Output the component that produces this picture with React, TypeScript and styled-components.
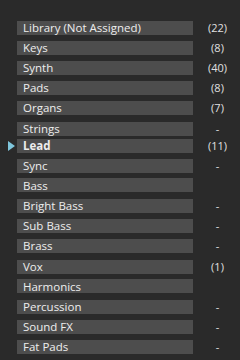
import React from "react";
import styled, { createGlobalStyle } from "styled-components";

const Global = createGlobalStyle`
  html, body { margin: 0; padding: 0; background: #2a2a2a; }
  body { width: 240px; height: 360px; overflow: hidden; }
`;

const List = styled.div`
  display: flex;
  flex-direction: column;
  gap: 6px;
  padding: 20px 0 0 0;
  width: 240px;
  height: 360px;
  box-sizing: border-box;
  background: #2a2a2a;
  font-family: "Open Sans", "DejaVu Sans", sans-serif;
`;

const Row = styled.div<{ $nudge?: number }>`
  display: grid;
  grid-template-columns: 17px 176px 1fr;
  align-items: center;
  height: 14px;
  margin-top: ${(p) => p.$nudge ?? 0}px;
`;

const Marker = styled.div`
  display: flex;
  justify-content: flex-end;
  padding-right: 2px;
`;

const Bar = styled.div<{ $bold?: boolean }>`
  display: flex;
  align-items: center;
  height: 14px;
  background: #4d4d4d;
  color: #ededed;
  font-size: 11.5px;
  font-weight: ${(p) => (p.$bold ? 700 : 400)};
  padding-left: 6px;
  white-space: nowrap;
`;

const Count = styled.div`
  color: #e0e0e0;
  font-size: 11px;
  text-align: center;
  margin-left: 2px;
`;

type Item = { name: string; count: string; nudge?: number; active?: boolean };

const items: Item[] = [
  { name: "Library (Not Assigned)", count: "(22)" },
  { name: "Keys", count: "(8)" },
  { name: "Synth", count: "(40)" },
  { name: "Pads", count: "(8)" },
  { name: "Organs", count: "(7)" },
  { name: "Strings", count: "-", nudge: 1 },
  { name: "Lead", count: "(11)", nudge: -3, active: true },
  { name: "Sync", count: "-" },
  { name: "Bass", count: "" },
  { name: "Bright Bass", count: "-" },
  { name: "Sub Bass", count: "-" },
  { name: "Brass", count: "-" },
  { name: "Vox", count: "(1)", nudge: 1 },
  { name: "Harmonics", count: "" },
  { name: "Percussion", count: "-" },
  { name: "Sound FX", count: "-" },
  { name: "Fat Pads", count: "-" },
];

export default function App() {
  return (
    <>
      <Global />
      <List>
        {items.map((it) => (
          <Row key={it.name} $nudge={it.nudge}>
            <Marker>
              {it.active && (
                <svg width="7" height="10" viewBox="0 0 7 10">
                  <polygon points="0,0 7,5 0,10" fill="#7fc6dc" />
                </svg>
              )}
            </Marker>
            <Bar $bold={it.active}>{it.name}</Bar>
            <Count>{it.count}</Count>
          </Row>
        ))}
      </List>
    </>
  );
}
